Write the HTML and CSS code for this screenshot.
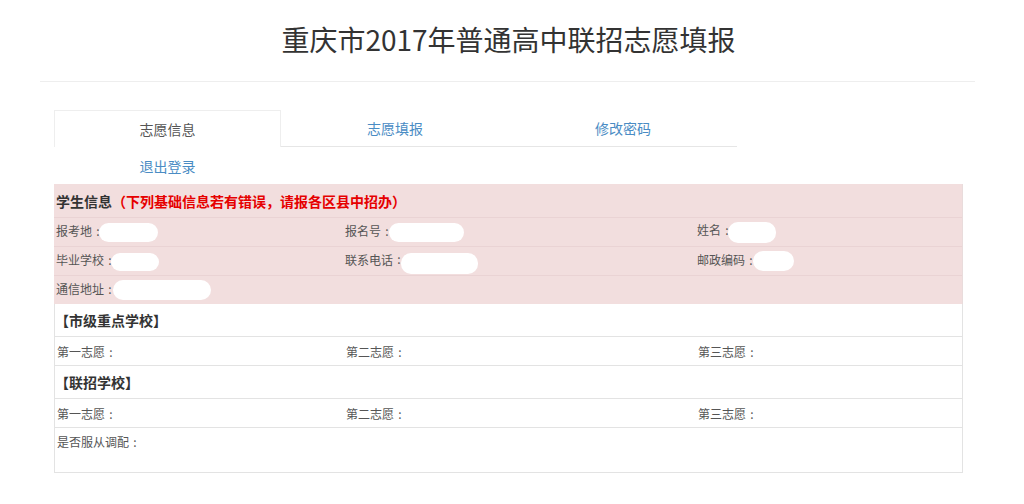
FILE: index.html
```html
<!DOCTYPE html>
<html lang="zh-CN">
<head>
<meta charset="utf-8">
<title>重庆市2017年普通高中联招志愿填报</title>
<link rel="stylesheet" href="styles.css">
</head>
<body>
<header class="header">
  <h1 class="title">重庆市2017年普通高中联招志愿填报</h1>
  <div class="rule"></div>
</header>
<main class="main">
  <ul class="tabs">
    <li class="tab active"><span>志愿信息</span></li>
    <li class="tab"><a href="#">志愿填报</a></li>
    <li class="tab"><a href="#">修改密码</a></li>
    <li class="tab plain"><a href="#">退出登录</a></li>
  </ul>
  <section class="info">
    <div class="row head"><div class="cell full"><b>学生信息</b><span class="warn">（下列基础信息若有错误，请报各区县中招办）</span></div></div>
    <div class="row">
      <div class="cell">报考地<span class="c">:</span><span class="blob b1"></span></div>
      <div class="cell">报名号<span class="c">:</span><span class="blob b2"></span></div>
      <div class="cell">姓名<span class="c">:</span><span class="blob b3"></span></div>
    </div>
    <div class="row">
      <div class="cell">毕业学校<span class="c">:</span><span class="blob b4"></span></div>
      <div class="cell">联系电话<span class="c">:</span><span class="blob b5"></span></div>
      <div class="cell">邮政编码<span class="c">:</span><span class="blob b6"></span></div>
    </div>
    <div class="row last">
      <div class="cell full">通信地址<span class="c">:</span><span class="blob b7"></span></div>
    </div>
  </section>
  <section class="choices">
    <div class="row sect"><div class="cell full">【市级重点学校】</div></div>
    <div class="row">
      <div class="cell">第一志愿<span class="c">:</span></div>
      <div class="cell">第二志愿<span class="c">:</span></div>
      <div class="cell">第三志愿<span class="c">:</span></div>
    </div>
    <div class="row sect"><div class="cell full">【联招学校】</div></div>
    <div class="row">
      <div class="cell">第一志愿<span class="c">:</span></div>
      <div class="cell">第二志愿<span class="c">:</span></div>
      <div class="cell">第三志愿<span class="c">:</span></div>
    </div>
    <div class="row tall"><div class="cell full">是否服从调配<span class="c">:</span></div></div>
  </section>
</main>
</body>
</html>
```

FILE: styles.css
```css
* { box-sizing: border-box; }
body {
  margin: 0;
  background: #fff;
  font-family: "Noto Sans CJK SC", "Noto Sans", sans-serif;
  color: #555;
}
.header { margin: 0 49px 0 40px; }
.title {
  margin: 0;
  padding-top: 22px;
  font-size: 28px;
  line-height: 34px;
  font-weight: normal;
  color: #333;
  text-align: center;
  padding-left: 2px;
}
.rule {
  margin-top: 25px;
  border-top: 1px solid #eeeeee;
}
.main {
  width: 909px;
  margin: 28px 0 0 54px;
}
.tabs {
  list-style: none;
  margin: 0;
  padding: 0;
  display: flex;
  flex-wrap: wrap;
  width: 909px;
}
.tab {
  width: 228px;
  height: 37px;
  display: flex;
  align-items: center;
  justify-content: center;
  font-size: 14px;
  border-bottom: 1px solid #e6e6e6;
}
.tab a { color: #4a8cc4; text-decoration: none; }
.tab.active {
  width: 227px;
  color: #555;
  border: 1px solid #eeeeee;
  border-bottom: none;
}
.tab.plain { border-bottom: none; width: 227px; }
.row {
  display: grid;
  grid-template-columns: 289px 352px 1fr;
  height: 29px;
  align-items: center;
  font-size: 12px;
}
.cell {
  padding-left: 2px;
  white-space: nowrap;
}
.cell.full { grid-column: 1 / 4; }
.c {
  display: inline-block;
  width: 12px;
  text-align: center;
}
.info {
  background: #f2dede;
  border-right: 1px solid #e9dcdc;
}
.info .row { border-bottom: 1px solid #ead3d4; }
.info .row.last { border-bottom: none; height: 28px; }
.info .row.head {
  height: 34px;
  font-size: 14px;
  padding-top: 1px;
}
.head b { color: #333; font-weight: bold; }
.warn { color: #e60000; font-weight: bold; }
.blob {
  display: inline-block;
  vertical-align: middle;
  background: #fff;
  border-radius: 10px;
  height: 19px;
}
.b1 { width: 59px; margin-left: -5px; }
.b2 { width: 75px; margin-left: -4px; }
.b3 { width: 48px; height: 21px; margin-left: -5px; }
.b4 { width: 48px; height: 18px; margin-left: -5px; }
.b5 { width: 77px; height: 21px; margin-left: -4px; margin-top: 4px; }
.b6 { width: 41px; height: 20px; margin-left: -4px; }
.b7 { width: 98px; height: 20px; margin-left: -3px; }
.choices {
  border: 1px solid #e3e3e3;
  border-top: none;
}
.choices .row { border-bottom: 1px solid #e3e3e3; }
.choices .row.sect {
  height: 33px;
  font-size: 14px;
  font-weight: bold;
  color: #333;
}
.choices .row.sect .cell { padding-left: 0; }
.choices .row.tall {
  height: 44px;
  border-bottom: none;
  align-items: start;
  padding-top: 5px;
}
```
